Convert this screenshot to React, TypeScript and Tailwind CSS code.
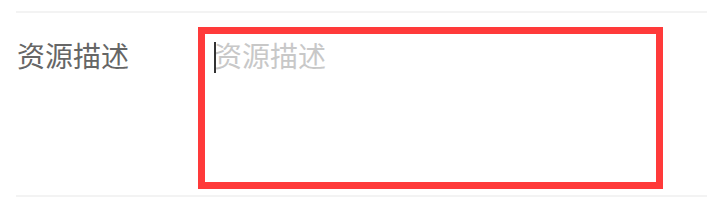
import { useState } from 'react';

export default function App() {
  const [desc, setDesc] = useState('');

  return (
    <div className="bg-white px-4 pt-[11px] pb-3" style={{ fontFamily: '"Noto Sans CJK SC", "Noto Sans", sans-serif' }}>
      {/* Form row */}
      <div className="flex border-y-2 border-[#f3f3f3] pt-[14px] pb-[6px]">
        <label className="w-[182px] shrink-0 pl-px pt-[12px] text-[28px] leading-[32px] text-[#666666]">
          资源描述
        </label>
        <div className="relative">
          <textarea
            value={desc}
            onChange={(e) => setDesc(e.target.value)}
            placeholder="资源描述"
            className="block h-[162px] w-[465px] resize-none border-[7px] border-[#ff3a3a] px-[9px] pt-[5px] text-[28px] leading-[32px] text-[#333] outline-none placeholder:text-[#c8c8c8]"
          />
          {/* caret */}
          {desc === '' && <span className="absolute left-[16px] top-[15px] h-[31px] w-[2px] bg-[#333]" />}
        </div>
      </div>
    </div>
  );
}
